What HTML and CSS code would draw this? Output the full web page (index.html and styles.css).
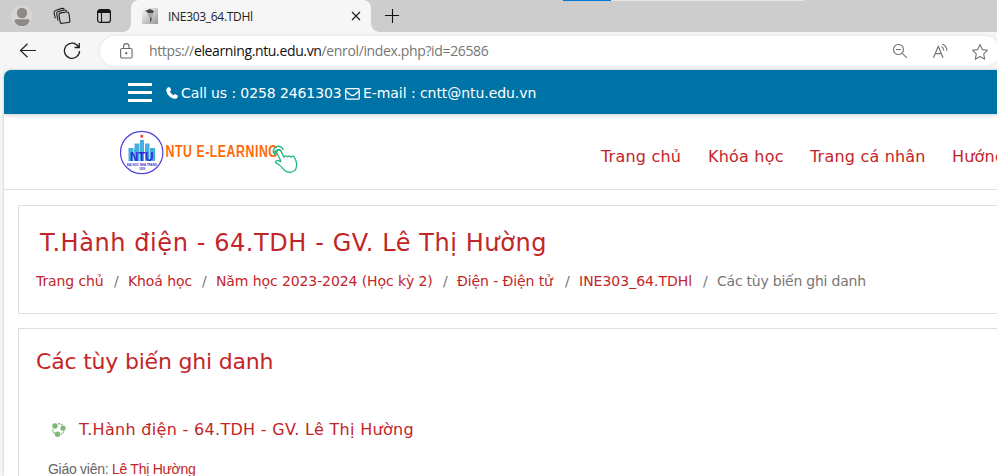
FILE: index.html
```html
<!DOCTYPE html>
<html lang="vi">
<head>
<meta charset="utf-8">
<title>INE303_64.TDHl</title>
<link rel="stylesheet" href="styles.css">
</head>
<body>
<div class="tabstrip">
  <div class="loading"><i></i></div>
  <div class="tools">
    <svg class="avatar" width="22" height="22" viewBox="0 0 22 22"><circle cx="11" cy="11" r="10.7" fill="#d9d6d1"/><circle cx="11" cy="8" r="5.200" fill="#8e8985"/><path d="M3.500 15.700q0-1.500 1.500-1.500h12q1.500 0 1.500 1.500C17.500 19.500 14.500 21 11 21S4.500 19.500 3.500 15.700z" fill="#8e8985"/></svg>
    <svg class="workspaces" width="18" height="18" viewBox="0 0 18 18" fill="none" stroke="#1c1c1c" stroke-width="1.100"><rect x="6.500" y="5.500" width="10" height="10.500" rx="2" transform="rotate(-8 11 11)"/><path d="M5 13.500 3.700 6.800Q3.500 5 5.200 4.500L11.500 3q1.700-.3 2.300 1.200M2.300 11.400 1.100 5.800Q.9 4 2.600 3.500L9 1.400q1.500-.3 2.100.7"/></svg>
    <svg class="tabmenu" width="16" height="16" viewBox="0 0 16 16"><rect x="1.600" y="1.600" width="12.800" height="12.800" rx="2.500" fill="none" stroke="#161616" stroke-width="1.200"/><path d="M1.600 5V4a2.400 2.400 0 0 1 2.400-2.400h8A2.400 2.400 0 0 1 14.400 4v1z" fill="#161616"/><path d="M5.500 5v9.400" stroke="#161616" stroke-width="1.100"/></svg>
  </div>
  <div class="tab">
    <svg width="16" height="16" viewBox="0 0 16 16"><defs><linearGradient id="g" x2="1" y2="1"><stop stop-color="#fafafa"/><stop offset="1" stop-color="#999"/></linearGradient></defs><path fill="url(#g)" d="M0 0h16v16H0z"/><path d="M3 3l5-2 4 2-1 2H6L5 4z" fill="#444"/><path d="M6 5h5v3l-2 2H8L6 8z" fill="#aaa"/><path d="M8 9l2 1-1 4H8z" fill="#555"/></svg>
    <span class="tabname">INE303_64.TDHl</span>
    <svg class="close" width="10" height="10" viewBox="0 0 10 10"><path d="M1 1l8 8M9 1 1 9" stroke="#222" stroke-width="1.200"/></svg>
  </div>
  <svg class="plus" width="14" height="14" viewBox="0 0 14 14"><path d="M7.500 0v14M0 6.500h14" stroke="#111" stroke-width="1.100"/></svg>
</div>
<div class="toolbar">
  <svg class="back" width="18" height="16" viewBox="0 0 18 16" fill="none" stroke="#222" stroke-width="1.200"><path d="M17 7.500H1.500M8.500.7 1.500 7.500l7 6.800"/></svg>
  <svg class="reload" width="18" height="18" viewBox="0 0 18 18" fill="none" stroke="#222" stroke-width="1.300"><path d="M15.500 4.800A7.600 7.600 0 1 0 16.600 9M16.300 1v4.500h-4.800"/></svg>
  <div class="address">
    <svg class="lock" width="14" height="16" viewBox="0 0 14 16" fill="none" stroke="#6b6b6b" stroke-width="1.100"><rect x=".6" y="5.500" width="11.500" height="9.500" rx="1.500"/><path d="M3.600 5.500V3.300a2.700 2.700 0 0 1 5.400 0v2.200"/><circle cx="6.300" cy="10.200" r=".6" fill="#555"/></svg>
    <span class="url">https://<b>elearning.ntu.edu.vn</b>/enrol/index.php?id=26586</span>
    <div class="actions">
      <svg width="16" height="16" viewBox="0 0 16 16" fill="none" stroke="#757575" stroke-width="1.100"><circle cx="6.500" cy="5.500" r="5"/><path d="M4 5.500h5M10.300 9.300l4.600 4.600"/></svg>
      <svg width="16" height="16" viewBox="0 0 16 16" fill="none" stroke="#757575" stroke-width="1.200"><path d="M1.500 13.700 6.300 2.200 11 13.700M3.300 9.700h6M9.500 2.500q2 1 2.200 4M10.200 0q4.500 1.600 4.700 6.700"/></svg>
      <svg width="18" height="18" viewBox="0 0 18 18" fill="none" stroke="#757575" stroke-width="1.100" stroke-linejoin="round"><path d="m8 .6 2.300 5 5.300.6-3.900 3.700 1 5.400L8 12.600l-4.700 2.700 1-5.400L.4 6.200l5.300-.6z"/></svg>
    </div>
  </div>
</div>
<main class="page">
  <div class="topbar">
    <div class="burger"><i></i><i></i><i></i></div>
    <svg class="phone" width="12" height="12" viewBox="0 0 12 12"><path fill="#fff" d="M2.300.3 4 .2 5.200 3.200 3.800 4.500Q5.200 7 7.500 8.200L8.900 6.900l2.900 1.500Q12 11.500 9 11.800C4.500 11.500.3 7 .2 2.700Q.8.700 2.300.3z"/></svg>
    <span class="call">Call us : 0258 2461303</span>
    <svg class="mail" width="15" height="12" viewBox="0 0 15 12" fill="none" stroke="#fff" stroke-width="1.300"><rect x=".7" y=".7" width="13.500" height="10.500" rx="1"/><path d="m.8 3 4.700 3.700q2 1.500 4 0L14.200 3"/></svg>
    <span class="email">E-mail : cntt@ntu.edu.vn</span>
  </div>
  <header class="header">
    <svg class="logo" width="180" height="46" viewBox="0 0 180 46">
      <circle cx="21.700" cy="22.500" r="21.200" fill="#fff" stroke="#5142dc" stroke-width="1.200"/>
      <path fill="#45afe0" d="M8.500 18h5v13h-5zM14 19h5v12h-5zM14.500 13.500h5V31h-5zM20 10h4v21h-4zM25 13.500h4.500V31H25zM30 18h5v13h-5z"/>
      <path fill="#e52b2b" d="m21.700 4 .6 1.500h1.600l-1.200 1 .5 1.600-1.500-1-1.500 1 .5-1.600-1.200-1h1.600z"/>
      <text class="ntu" x="10" y="31" textLength="23.500" lengthAdjust="spacingAndGlyphs">NTU</text>
      <text class="school" x="7" y="35.800" textLength="30" lengthAdjust="spacingAndGlyphs">ĐẠI HỌC NHA TRANG</text>
      <text class="school" x="19" y="39.700" textLength="6" lengthAdjust="spacingAndGlyphs">1959</text>
      <text class="brand" transform="translate(45.500 27) scale(.77 1)" textLength="146" lengthAdjust="spacing">NTU E-LEARNING</text>
      <g fill="none" stroke="#20b982" stroke-width="1.300" stroke-linejoin="round"><path fill="#fff" d="m156.500 22 4.500 9.500-3-.8q-3-.2-2.300 2 4 2 6.800 5.500 3.500 4.500 8 4.300l4.500-2q2.500-4 1.200-9l-1.800-4.300q-1.800-2.300-3.500 0-1.400-2.200-3.400-.3-1.500-2-3.600.2l-3.200-6.500q-1.600-2.300-3.200.2z"/><path d="M155 25.500a3.800 3.800 0 1 1 6.500-4M153.500 23.500a5.300 5.300 0 1 1 10-3.500"/></g>
    </svg>
    <nav class="nav"><a>Trang chủ</a><a>Khóa học</a><a>Trang cá nhân</a><a>Hướng dẫn</a></nav>
  </header>
  <section class="card course">
    <h1>T.Hành điện - 64.TDH - GV. Lê Thị Hường</h1>
    <ol class="crumbs"><li class="c1">Trang chủ</li><li class="c2">Khoá học</li><li class="c3">Năm học 2023-2024 (Học kỳ 2)</li><li class="c4">Điện - Điện tử</li><li class="c5">INE303_64.TDHl</li><li class="c6">Các tùy biến ghi danh</li></ol>
  </section>
  <section class="card enrol">
    <h2>Các tùy biến ghi danh</h2>
    <div class="coursename">
      <svg width="16" height="16" viewBox="0 0 16 16"><g fill="#7fb77a"><circle cx="4" cy="4" r="2.700"/><circle cx="12" cy="6.200" r="2.600"/><circle cx="6.500" cy="12.300" r="2.700"/></g><g fill="none" stroke="#7fb77a" stroke-width="1.400"><path d="M7 1.800h2M10 2.200l1.500.8M1.800 7.500v1.800M2.200 10l1.300 1.300M9.800 12.500l1.500-1M12 11l.8-1.500"/></g></svg>
      <h3>T.Hành điện - 64.TDH - GV. Lê Thị Hường</h3>
    </div>
    <p class="teacher"><span>Giáo viên:</span> <a>Lê Thị Hường</a></p>
  </section>
</main>
</body>
</html>
```
FILE: styles.css
```css
* { box-sizing: border-box; }
body { margin: 0; width: 997px; height: 476px; overflow: hidden; background: #f6f6f6; font-family: "DejaVu Sans", Verdana, sans-serif; white-space: nowrap; }
svg { display: block; flex: none; }
h1, h2, h3, p, ol { margin: 0; padding: 0; font-weight: 400; }

.tabstrip { position: relative; display: flex; align-items: flex-start; height: 32px; background: #cdcdcd; }
.loading { position: absolute; left: 563px; top: 0; width: 241px; height: 1px; background: #e6e6e6; }
.loading i { display: block; width: 48px; height: 1px; background: #0078d7; }
.tools { display: flex; width: 131px; height: 32px; }
.avatar { margin: 5px 0 0 11px; }
.workspaces { margin: 7px 0 0 20px; }
.tabmenu { margin: 8px 0 0 25px; }
.tab { position: relative; display: flex; align-items: center; width: 240px; height: 32px; padding: 0 10px 0 11px; background: #f6f6f6; border-radius: 8px 8px 0 0; }
.tab::before, .tab::after { content: ""; position: absolute; bottom: 0; width: 8px; height: 8px; }
.tab::before { left: -8px; background: radial-gradient(circle at 0 0, transparent 7.500px, #f6f6f6 8px); }
.tab::after { right: -8px; background: radial-gradient(circle at 100% 0, transparent 7.500px, #f6f6f6 8px); }
.tabname { margin-left: 10px; font: 12px "Open Sans", sans-serif; letter-spacing: -.3px; color: #222; }
.close { margin-left: auto; }
.plus { margin: 9px 0 0 14px; }

.toolbar { display: flex; height: 38px; padding-top: 4px; }
.back { margin: 7px 0 0 19px; }
.reload { margin: 6px 0 0 26px; }
.address { display: flex; width: 900px; flex: none; height: 30px; margin-left: 19px; background: #fff; border-radius: 15px; box-shadow: 0 0 3px #ddd; }
.lock { margin: 7px 0 0 20px; }
.url { margin-left: 15px; line-height: 30px; font-family: "Open Sans", sans-serif; font-size: 14px; letter-spacing: -.36px; color: #767676; }
.url b { font-weight: 400; color: #111; }
.actions { display: flex; gap: 24px; width: 105px; margin: 8px 3px 0 auto; }

.page { margin-left: 4px; height: 406px; background: #fff; border-radius: 7px 0 0; overflow: hidden; box-shadow: 0 0 3px #bbb; }
.topbar { display: flex; height: 44px; background: #0073a6; color: #fff; font-size: 14px; line-height: 46px; box-shadow: 0 1px 4px #ccc; }
.burger { display: flex; flex-direction: column; gap: 5px; margin: 13px 0 0 124px; width: 24px; }
.burger i { height: 3px; background: #fff; }
.phone { margin: 17px 0 0 14px; }
.call { width: 163px; margin-left: 3px; letter-spacing: -.1px; }
.mail { margin: 18px 0 0 1px; }
.email { margin-left: 3px; letter-spacing: -.06px; }
.header { display: flex; height: 76px; border-bottom: 1px solid #e1e1e1; }
.logo { margin: 16px 0 0 116px; }
.ntu { font: bold 12px "Liberation Sans", sans-serif; fill: #3a25dc; }
.school { font: bold 4px "Liberation Sans", sans-serif; fill: #3826cc; }
.brand { font: bold 16px "Liberation Sans", sans-serif; fill: #ff6b09; }
.nav { display: flex; margin-left: 301px; font-size: 16px; line-height: 86px; letter-spacing: .2px; color: #c22528; }
.nav a { flex: none; width: 107px; }
.nav a:nth-child(2) { width: 102px; }
.nav a:nth-child(3) { width: 142px; }

.card { width: 1000px; margin-left: 14px; border: 1px solid #dedede; color: #c22528; }
.course { height: 109px; margin-top: 15px; }
.course h1 { padding-left: 21px; margin-top: 19px; font-size: 24px; line-height: 36px; letter-spacing: .58px; }
.crumbs { display: flex; padding-left: 17px; margin-top: 10px; list-style: none; font-size: 14px; line-height: 20px; letter-spacing: -.1px; }
.crumbs li { flex: none; }
.crumbs li + li::before { content: "/"; display: inline-block; width: 14px; color: #6c757d; }
.c1 { width: 78px; }
.c2 { width: 88px; }
.c3 { width: 241px; }
.c4 { width: 122px; }
.c5 { width: 138px; letter-spacing: 0; }
.c6 { color: #777; letter-spacing: -.23px; }
.enrol { height: 160px; margin-top: 14px; }
.enrol h2 { padding-left: 17px; margin-top: 18px; font-size: 22px; line-height: 30px; letter-spacing: -.2px; }
.coursename { display: flex; align-items: center; height: 30px; margin: 38px 0 0 32px; }
.coursename h3 { margin-left: 12px; font-size: 16px; line-height: 30px; letter-spacing: .31px; }
.teacher { padding-left: 29px; margin-top: 13px; font: 14px/22px "Liberation Sans", sans-serif; letter-spacing: -.27px; }
.teacher span { color: #666; }
```
